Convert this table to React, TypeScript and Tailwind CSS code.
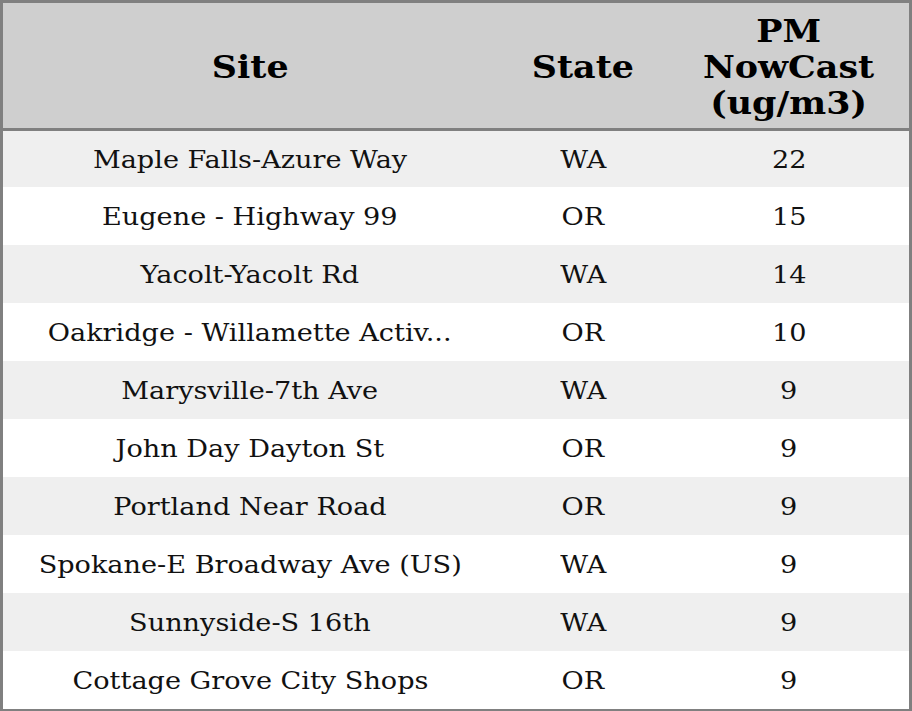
const rows = [
  { site: "Maple Falls-Azure Way", state: "WA", pm: "22" },
  { site: "Eugene - Highway 99", state: "OR", pm: "15" },
  { site: "Yacolt-Yacolt Rd", state: "WA", pm: "14" },
  { site: "Oakridge - Willamette Activ...", state: "OR", pm: "10" },
  { site: "Marysville-7th Ave", state: "WA", pm: "9" },
  { site: "John Day Dayton St", state: "OR", pm: "9" },
  { site: "Portland Near Road", state: "OR", pm: "9" },
  { site: "Spokane-E Broadway Ave (US)", state: "WA", pm: "9" },
  { site: "Sunnyside-S 16th", state: "WA", pm: "9" },
  { site: "Cottage Grove City Shops", state: "OR", pm: "9" },
];

function Cell({ children }: { children: React.ReactNode }) {
  return (
    <div className="flex items-center justify-center">
      <span className="inline-block scale-x-[1.13] whitespace-nowrap">{children}</span>
    </div>
  );
}

export default function App() {
  return (
    <div className="h-[711px] w-[912px] bg-white font-['DejaVu_Serif',serif] text-black">
      <div className="flex h-full w-full flex-col border-[3px] border-[#808080]">
        <div className="grid h-[128px] shrink-0 grid-cols-[494px_172px_1fr] border-b-[3px] border-[#808080] bg-[#cfcfcf] text-[32px] font-bold leading-[36px]">
          <div className="flex items-center justify-center pt-[2px]">
            <span className="inline-block scale-x-[1.09]">Site</span>
          </div>
          <div className="flex items-center justify-center pt-[2px]">
            <span className="inline-block scale-x-[1.09]">State</span>
          </div>
          <div className="flex items-center justify-center pt-[2px] text-center">
            <span className="inline-block scale-x-[1.09]">
              PM
              <br />
              NowCast
              <br />
              (ug/m3)
            </span>
          </div>
        </div>
        {rows.map((row, i) => (
          <div
            key={row.site}
            className={`grid shrink-0 grid-cols-[494px_172px_1fr] pt-[2px] text-[24px] text-[#111] ${
              i === 0 ? "h-[56px]" : "h-[58px]"
            } ${i % 2 === 0 ? "bg-[#efefef]" : "bg-white"}`}
          >
            <Cell>{row.site}</Cell>
            <Cell>{row.state}</Cell>
            <Cell>{row.pm}</Cell>
          </div>
        ))}
      </div>
    </div>
  );
}
